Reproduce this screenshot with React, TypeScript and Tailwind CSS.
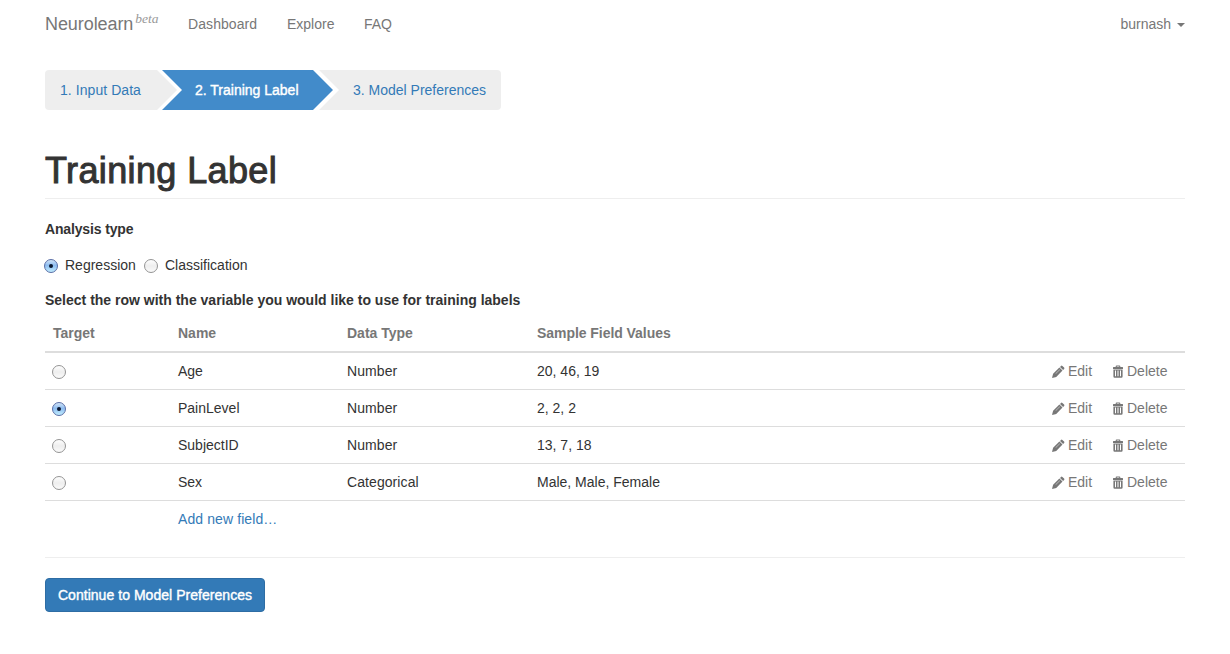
import { useState } from "react";

const fields = [
  { name: "Age", type: "Number", sample: "20, 46, 19" },
  { name: "PainLevel", type: "Number", sample: "2, 2, 2" },
  { name: "SubjectID", type: "Number", sample: "13, 7, 18" },
  { name: "Sex", type: "Categorical", sample: "Male, Male, Female" },
];

function Radio({ checked, onSelect, label }: { checked: boolean; onSelect: () => void; label: string }) {
  return (
    <button type="button" role="radio" aria-checked={checked} aria-label={label} onClick={onSelect} className="block h-[15px] w-[15px] shrink-0">
      <svg viewBox="0 0 15 15" className="block h-[15px] w-[15px]">
        <defs>
          <linearGradient id="radio-on" x1="0" y1="0" x2="0" y2="1">
            <stop offset="0" stopColor="#d8e8f8" />
            <stop offset="0.45" stopColor="#8dbcf0" />
            <stop offset="1" stopColor="#c4f0ff" />
          </linearGradient>
          <linearGradient id="radio-off" x1="0" y1="0" x2="0" y2="1">
            <stop offset="0" stopColor="#ffffff" />
            <stop offset="0.5" stopColor="#eeeeee" />
            <stop offset="1" stopColor="#fbfbfb" />
          </linearGradient>
        </defs>
        <circle cx="7" cy="7" r="6.5" fill={checked ? "url(#radio-on)" : "url(#radio-off)"} stroke={checked ? "#5b6ea6" : "#949494"} strokeWidth="1" />
        {checked && <circle cx="7" cy="7" r="2" fill="#0a1730" />}
      </svg>
    </button>
  );
}

function Pencil() {
  return (
    <svg viewBox="0 0 14 14" className="mt-px h-[14px] w-[14px] shrink-0" fill="#777777">
      <path d="M9 1.9 10 .9q.7-.7 1.4 0l1.7 1.7q.7.7 0 1.4l-1 1z" />
      <path fillRule="evenodd" d="M8.4 2.5 11.5 5.6 5.2 11.9 1 13l1.1-4.2zM8.7 4.5 4.6 8.6l.25.25 4.1-4.1z" />
    </svg>
  );
}

function Trash() {
  return (
    <svg viewBox="0 0 12 14" className="mt-px h-[14px] w-[12px] shrink-0" fill="#777777">
      <path fillRule="evenodd" d="M3.7 2V1.3Q3.7.5 4.5.5h3q.8 0 .8.8V2h2.2q.5 0 .5.5V4H1V2.5Q1 2 1.5 2zm1.1 0h2.4v-.6H4.8z" />
      <path fillRule="evenodd" d="M1.4 4.4h9.2v7.2q0 1.2-1.2 1.2H2.6q-1.2 0-1.2-1.2zM3 5.5v5.8h1V5.5zm2.5 0v5.8h1V5.5zm2.5 0v5.8h1V5.5z" />
    </svg>
  );
}

export default function App() {
  const [analysis, setAnalysis] = useState("Regression");
  const [target, setTarget] = useState("PainLevel");

  return (
    <div className="min-h-[654px] bg-white px-[45px] font-['Liberation_Sans',Arial,sans-serif] text-sm leading-5 text-[#333333]">
      <nav className="flex h-[70px] items-start pt-[14px] text-[#777777]">
        <a href="#" className="flex w-[143px] items-start text-lg leading-5">
          <span className="tracking-[-0.08px]">Neurolearn</span>
          <sup className="top-0 -mt-[5px] ml-[2px] font-['Liberation_Serif',serif] text-[13.5px] leading-5 text-[#999999] italic">beta</sup>
        </a>
        <a href="#" className="w-[99px] tracking-[0.08px]">Dashboard</a>
        <a href="#" className="w-[77px]">Explore</a>
        <a href="#">FAQ</a>
        <button type="button" className="ml-auto flex items-center gap-[6px]">
          burnash
          <span className="mt-[2px] h-0 w-0 border-x-4 border-t-4 border-x-transparent border-t-[#777777]" />
        </button>
      </nav>

      <ol className="flex h-10 leading-10 text-[#337ab7]">
        <li className="w-[132px] rounded-l bg-[#eeeeee] pl-[15px] tracking-[0.06px] [clip-path:polygon(0_0,112px_0,132px_50%,112px_100%,0_100%)]">1. Input Data</li>
        <li className="-ml-[15px] w-[171px] bg-[#428bca] pl-[33px] text-white [-webkit-text-stroke:0.4px_white] [clip-path:polygon(0_0,151px_0,171px_50%,151px_100%,0_100%,20px_50%)]">2. Training Label</li>
        <li className="-ml-[14px] w-[182px] rounded-r bg-[#eeeeee] pl-[34px] [clip-path:polygon(0_0,100%_0,100%_100%,0_100%,20px_50%)]">3. Model Preferences</li>
      </ol>

      <h1 className="mt-[41px] h-12 border-b border-[#eeeeee] text-4xl leading-10 tracking-[0.38px] [-webkit-text-stroke:1px_#333333]">Training Label</h1>

      <div className="mt-5 font-bold tracking-[-0.15px]">Analysis type</div>
      <div className="mt-4 -ml-px flex h-5">
        {["Regression", "Classification"].map((kind) => (
          <div key={kind} className="flex w-[100px] gap-[6px]">
            <div className="pt-[4px]">
              <Radio checked={analysis === kind} onSelect={() => setAnalysis(kind)} label={kind} />
            </div>
            <span>{kind}</span>
          </div>
        ))}
      </div>
      <div className="mt-[15px] font-bold">Select the row with the variable you would like to use for training labels</div>

      <div className="mt-[5px]">
        <div className="grid h-[38px] grid-cols-[125px_169px_190px_1fr] border-b-2 border-[#dddddd] px-2 pt-2 font-bold text-[#777777]">
          <span>Target</span>
          <span>Name</span>
          <span>Data Type</span>
          <span className="tracking-[-0.05px]">Sample Field Values</span>
        </div>
        {fields.map((field) => (
          <div key={field.name} className="grid h-[37px] grid-cols-[125px_169px_190px_514px_61px_auto] border-b border-[#dddddd] px-2 pt-2">
            <div className="-ml-px pt-[4px]">
              <Radio checked={target === field.name} onSelect={() => setTarget(field.name)} label={field.name} />
            </div>
            <span>{field.name}</span>
            <span className="tracking-[0.08px]">{field.type}</span>
            <span>{field.sample}</span>
            <a href="#" className="flex h-5 items-center gap-[3px] text-[#777777]"><Pencil />Edit</a>
            <a href="#" className="flex h-5 items-center gap-[3px] text-[#777777]"><Trash />Delete</a>
          </div>
        ))}
        <div className="h-14 pt-2 pl-[133px]">
          <a href="#" className="tracking-[0.1px] text-[#337ab7]">Add new field…</a>
        </div>
      </div>

      <div className="border-t border-[#eeeeee] pt-5">
        <button type="button" className="h-[34px] w-[220px] rounded border border-[#2e6da4] bg-[#337ab7] tracking-[0.04px] text-white [-webkit-text-stroke:0.4px_white]">
          Continue to Model Preferences
        </button>
      </div>
    </div>
  );
}
